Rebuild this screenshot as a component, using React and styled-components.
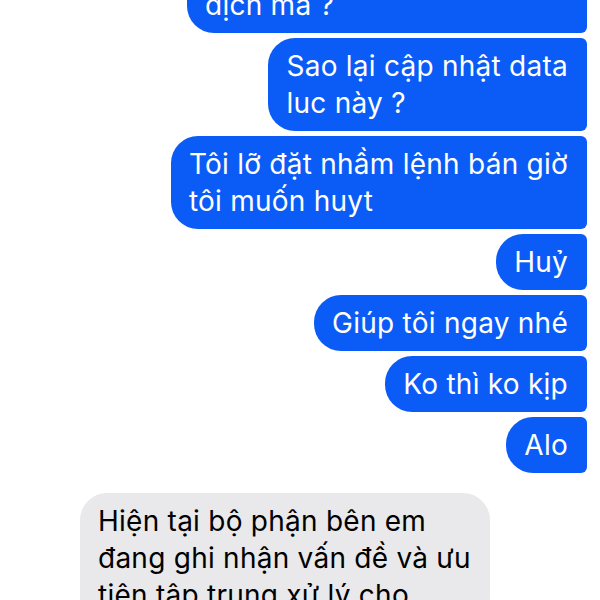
import React from 'react'
import styled, { createGlobalStyle } from 'styled-components'

const GlobalStyle = createGlobalStyle`
    html, body {
        margin: 0;
        padding: 0;
        background: #fff;
        overflow: hidden;
    }
    body {
        font-family: Inter, "Liberation Sans", "Noto Sans", sans-serif;
        -webkit-font-smoothing: antialiased;
    }
`

const Messages = [
    { id: 1, out: true, lines: ['Tôi muốn hỏi về lệnh giao', 'dịch mã ?'], width: 400 },
    { id: 2, out: true, lines: ['Sao lại cập nhật data', 'luc này ?'] },
    { id: 3, out: true, lines: ['Tôi lỡ đặt nhầm lệnh bán giờ', 'tôi muốn huyt'] },
    { id: 4, out: true, lines: ['Huỷ'] },
    { id: 5, out: true, lines: ['Giúp tôi ngay nhé'] },
    { id: 6, out: true, lines: ['Ko thì ko kịp'] },
    { id: 7, out: true, lines: ['Alo'] },
    {
        id: 8,
        out: false,
        lines: ['Hiện tại bộ phận bên em', 'đang ghi nhận vấn đề và ưu', 'tiện tập trung xử lý cho'],
        width: 410,
    },
]

const App = () => {
    return (
        <>
            <GlobalStyle />
            <Thread>
                {Messages.map((msg) => (
                    <Bubble key={msg.id} $out={msg.out} $width={msg.width}>
                        {msg.lines.map((line, i) => (
                            <Line key={i}>{line}</Line>
                        ))}
                    </Bubble>
                ))}
            </Thread>
        </>
    )
}

export default App

const Thread = styled.div`
    display: flex;
    flex-direction: column;
    gap: 5px;
    padding: 0 13px 0 80px;
    margin-top: -60px;
    height: 660px;
    overflow: hidden;
`

const Bubble = styled.div`
    align-self: ${(p) => (p.$out ? 'flex-end' : 'flex-start')};
    width: ${(p) => (p.$width ? `${p.$width}px` : 'auto')};
    box-sizing: border-box;
    padding: 9.5px 19px 9.5px 18px;
    margin-top: ${(p) => (p.$out ? '0' : '15px')};
    border-radius: ${(p) => (p.$out ? '27px 6px 6px 27px' : '27px')};
    background: ${(p) => (p.$out ? '#0b5cf6' : '#e9e9eb')};
    color: ${(p) => (p.$out ? '#fff' : '#000')};
    font-size: 28px;
    line-height: 37px;
    letter-spacing: 0.25px;
    flex-shrink: 0;
`

const Line = styled.div`
    white-space: nowrap;
`
